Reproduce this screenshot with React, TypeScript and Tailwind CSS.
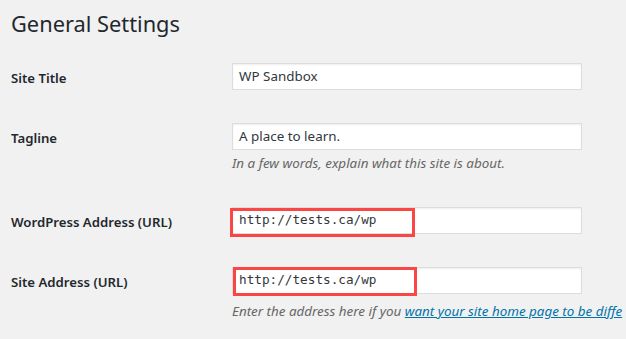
import React from "react";

const sans = { fontFamily: '"Noto Sans", "Open Sans", sans-serif' };
const mono = { fontFamily: '"DejaVu Sans Mono", "Liberation Mono", monospace' };

function Field({
  value,
  monoText,
  highlight,
}: {
  value: string;
  monoText?: boolean;
  highlight?: { left: number; top: number; width: number; height: number };
}) {
  return (
    <div className="relative w-[350px] h-[27px]">
      <div className="w-full h-full bg-white border border-[#dddddd] shadow-[inset_0_1px_2px_rgba(0,0,0,0.07)] flex items-center pl-[6px] text-[#32373c]">
        <span
          className={monoText ? "text-[12.7px] leading-none" : "text-[13.4px] leading-none"}
          style={monoText ? mono : sans}
        >
          {value}
        </span>
      </div>
      {highlight && (
        <div
          className="absolute border-[3px] border-[#fb4646]"
          style={{
            left: highlight.left,
            top: highlight.top,
            width: highlight.width,
            height: highlight.height,
          }}
        />
      )}
    </div>
  );
}

function Row({
  label,
  children,
  className,
}: {
  label: string;
  children: React.ReactNode;
  className: string;
}) {
  return (
    <div className={"flex " + className}>
      <div
        className="w-[221px] shrink-0 mt-[5px] text-[13.2px] leading-[20px] font-semibold text-[#23282d] whitespace-nowrap"
        style={sans}
      >
        {label}
      </div>
      <div className="flex flex-col">{children}</div>
    </div>
  );
}

export default function App() {
  return (
    <div className="w-[626px] h-[339px] bg-[#f1f1f1] overflow-hidden pl-[11px]" style={sans}>
      <h1 className="pt-[9px] text-[21.8px] leading-[29px] font-normal text-[#23282d] whitespace-nowrap" style={sans}>
        General Settings
      </h1>

      <Row label="Site Title" className="mt-[25px]">
        <Field value="WP Sandbox" />
      </Row>

      <Row label="Tagline" className="mt-[33px]">
        <Field value="A place to learn." />
        <p className="mt-[4px] text-[13.4px] leading-[18px] italic text-[#666666] whitespace-nowrap" style={sans}>
          In a few words, explain what this site is about.
        </p>
      </Row>

      <Row label="WordPress Address (URL)" className="mt-[35px]">
        <Field
          value="http://tests.ca/wp"
          monoText
          highlight={{ left: -2, top: 1, width: 185, height: 29 }}
        />
      </Row>

      <Row label="Site Address (URL)" className="mt-[33px]">
        <Field
          value="http://tests.ca/wp"
          monoText
          highlight={{ left: 1, top: 0, width: 184, height: 29 }}
        />
        <p className="mt-[8px] text-[13.4px] leading-[18px] italic text-[#666666] whitespace-nowrap" style={sans}>
          Enter the address here if you{" "}
          <a className="text-[#0073aa] underline" href="#">
            want your site home page to be diffe
          </a>
        </p>
      </Row>
    </div>
  );
}
